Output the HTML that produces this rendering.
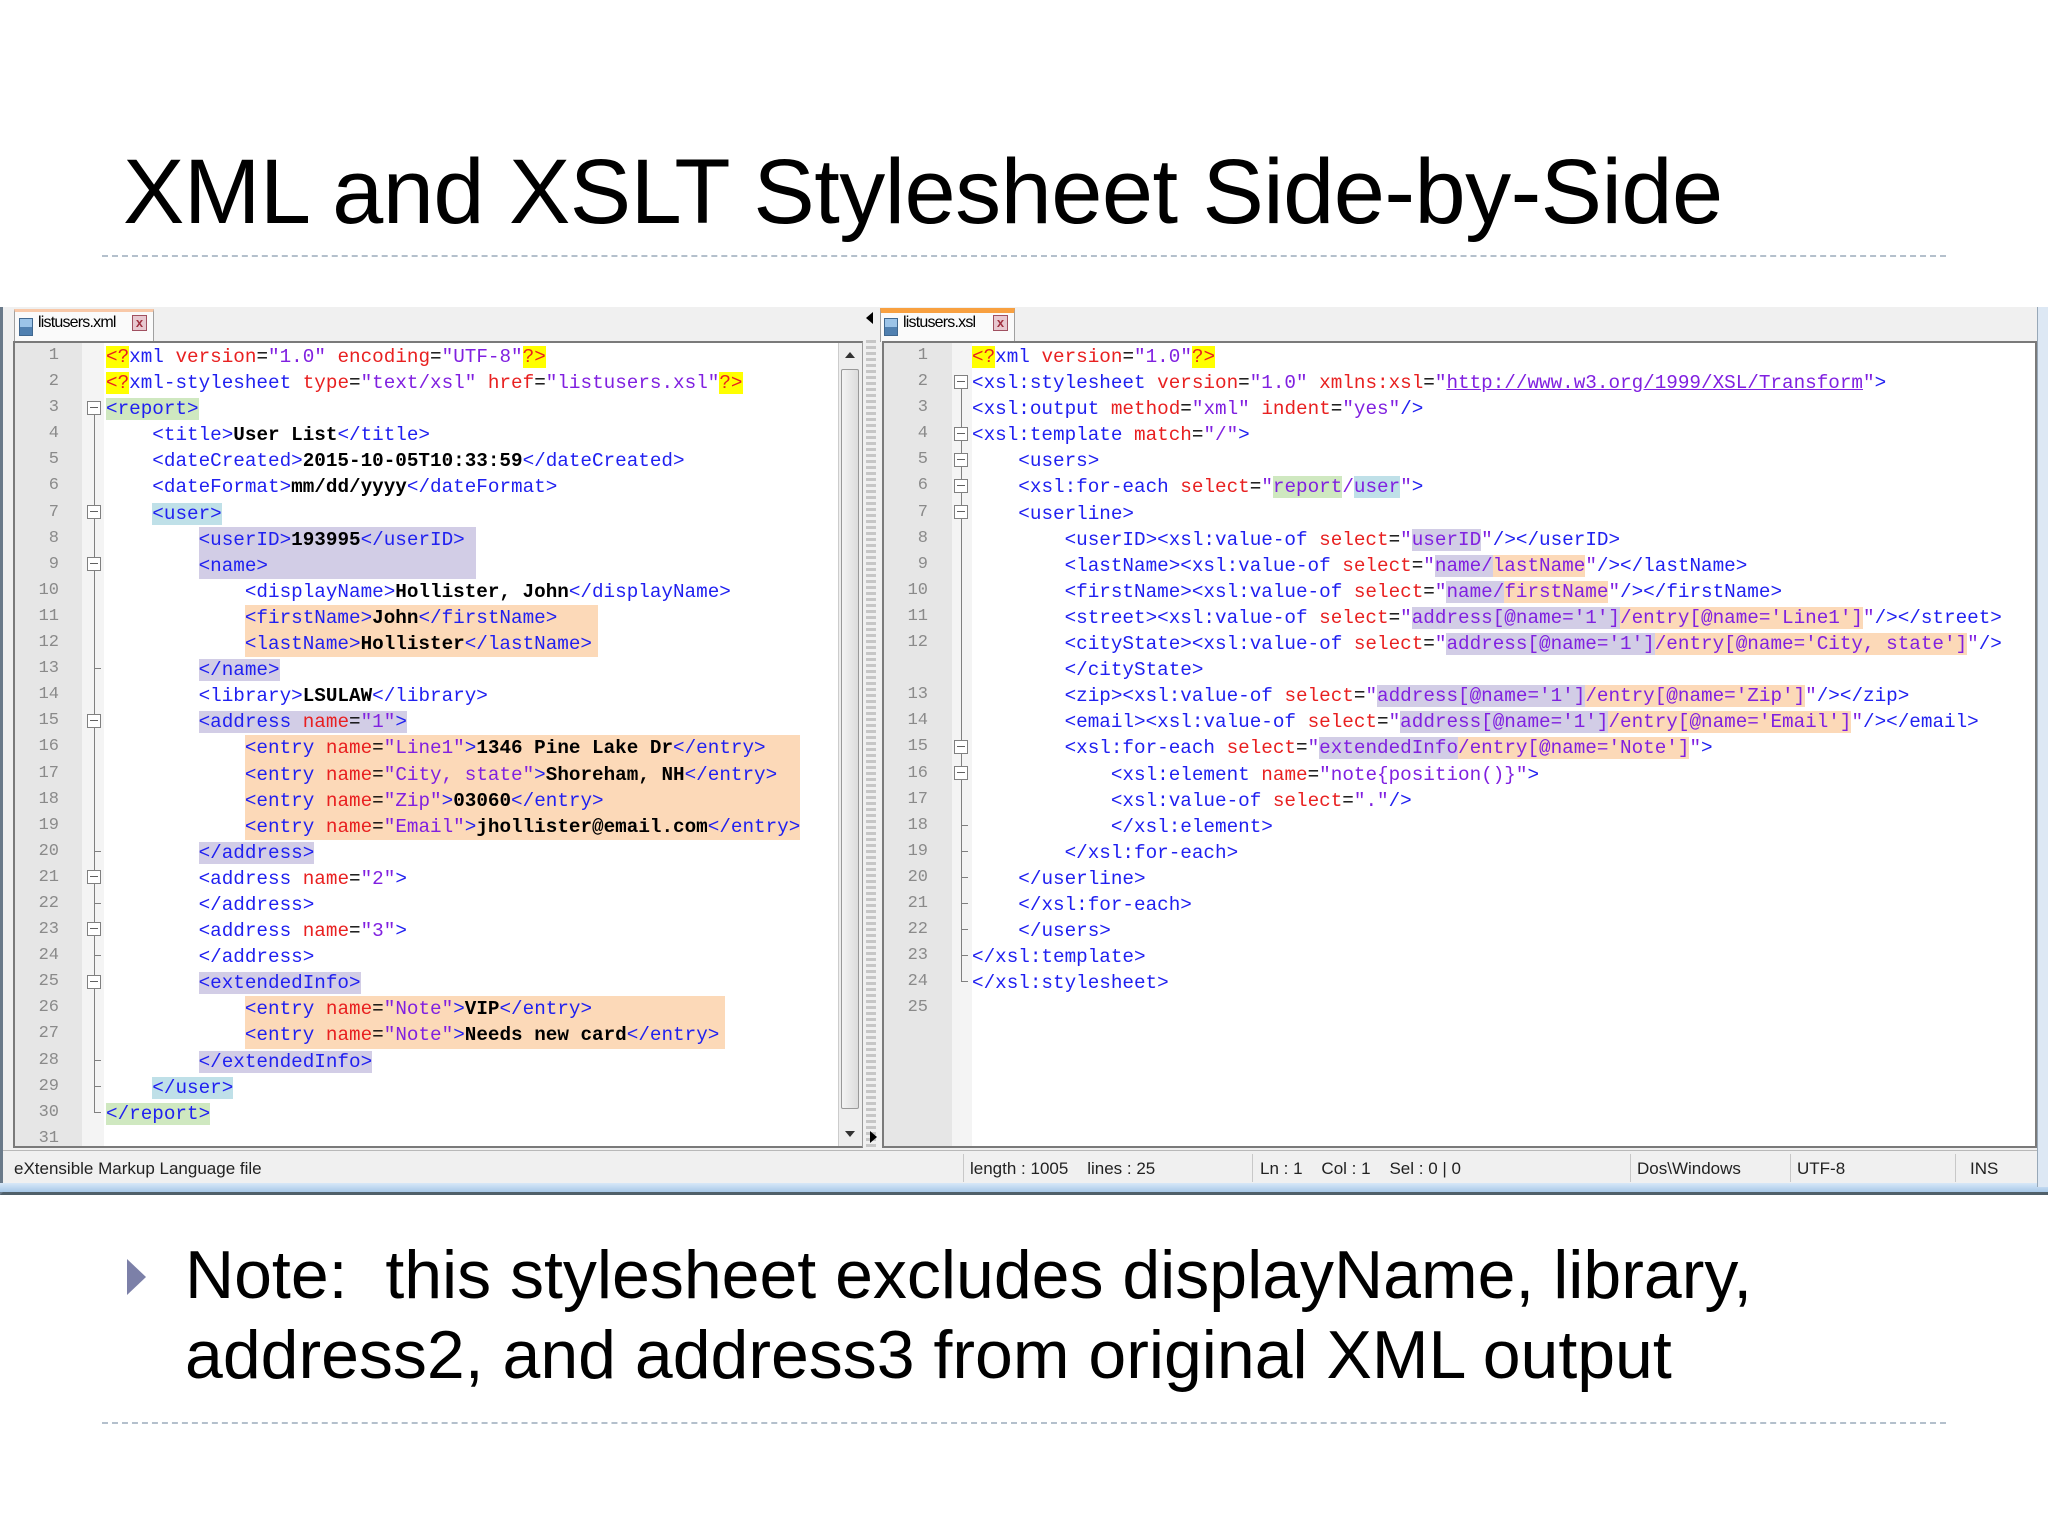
<!DOCTYPE html>
<html><head><meta charset="utf-8"><style>
*{margin:0;padding:0;box-sizing:border-box}
body{width:2048px;height:1536px;background:#fff;position:relative;overflow:hidden;font-family:"Liberation Sans",sans-serif}
.abs{position:absolute}
.title{left:123px;top:142px;font-size:92px;line-height:100px;letter-spacing:-0.55px;color:#000;white-space:nowrap}
.dash{height:0;border-top:2px dashed #b4c0cc}
.code{font-family:"Liberation Mono",monospace;font-size:19.3px;line-height:26.1px;white-space:normal;color:#000}
.code div{height:26.1px;white-space:pre}
.t{color:#2020f0}.a{color:#e82020}.v{color:#8020e0}.b{font-weight:bold;color:#000}
.y{background:#ffff00}.g{background:#cfe8c0}.u{background:#bfe0e8}.p{background:#d2cde6}.o{background:#fcd9b8}
.blk{display:inline-block}
.ln{font-family:"Liberation Mono",monospace;font-size:17px;line-height:26.1px;color:#8a8a8a;text-align:right}
.ln div{height:26.1px}
.fb{position:absolute;width:14px;height:14px;border:1px solid #808080;background:#fff}
.fb:after{content:"";position:absolute;left:2px;right:2px;top:5px;height:1px;background:#606060}
.fl{position:absolute;width:1px;background:#808080}
.tk{position:absolute;width:7px;height:1px;background:#808080}
.st{font-size:17px;color:#222;top:1159px;white-space:pre}
.sep{top:1154px;width:1px;height:28px;background:#c8c8c8}
.lnk{color:#8020e0;text-decoration:underline}
</style></head><body>

<div class="abs title">XML and XSLT Stylesheet Side-by-Side</div>
<div class="abs dash" style="left:102px;top:255px;width:1844px"></div>

<div class="abs" style="left:0;top:307px;width:2048px;height:888px;background:#f0f0f0;border-left:3px solid #6a7a8a;border-bottom:3px solid #50606a"></div>
<div class="abs" style="left:0;top:1183px;width:2048px;height:9px;background:linear-gradient(#d8e8f8,#a8c8e8)"></div>
<div class="abs" style="left:2037px;top:307px;width:11px;height:880px;background:#dde8f4;border-left:1px solid #98a8b8"></div>

<div class="abs" style="left:14px;top:309px;width:140px;height:33px;background:#fafafa;border:1px solid #a0a0a0;border-bottom:none;border-top:3px solid #f8c8a8"></div>
<div class="abs" style="left:19px;top:318px;width:14px;height:18px;background:linear-gradient(#9cc4e8 50%,#5080b0 50%);border:1px solid #406890"></div>
<div class="abs" style="left:38px;top:314px;font-size:16px;letter-spacing:-0.8px;color:#000">listusers.xml</div>
<div class="abs" style="left:132px;top:315px;width:15px;height:16px;background:#e8c8d0;border:1px solid #a05060;color:#a03040;font-size:13px;line-height:14px;text-align:center;font-weight:bold">x</div>

<div class="abs" style="left:880px;top:308px;width:135px;height:34px;background:#fafafa;border:1px solid #a0a0a0;border-bottom:none;border-top:5px solid #f8a040"></div>
<div class="abs" style="left:884px;top:318px;width:14px;height:18px;background:linear-gradient(#9cc4e8 50%,#5080b0 50%);border:1px solid #406890"></div>
<div class="abs" style="left:903px;top:314px;font-size:16px;letter-spacing:-0.8px;color:#000">listusers.xsl</div>
<div class="abs" style="left:993px;top:315px;width:15px;height:16px;background:#e8c8d0;border:1px solid #a05060;color:#a03040;font-size:13px;line-height:14px;text-align:center;font-weight:bold">x</div>

<div class="abs" style="left:866px;top:340px;width:10px;height:808px;background:repeating-linear-gradient(#bbb 0 3px,#f0f0f0 3px 6px);opacity:.8"></div>
<div class="abs" style="left:866px;top:312px;width:0;height:0;border-top:6px solid transparent;border-bottom:6px solid transparent;border-right:7px solid #000"></div>
<div class="abs" style="left:870px;top:1131px;width:0;height:0;border-top:6px solid transparent;border-bottom:6px solid transparent;border-left:7px solid #000"></div>

<div class="abs" style="left:13px;top:341px;width:850px;height:807px;background:#fff;border:2px solid #7a7a7a;border-right:1px solid #999;overflow:hidden">
  <div class="abs" style="left:0;top:0;width:67px;height:807px;background:#e6e6e6"></div>
  <div class="abs" style="left:67px;top:0;width:22px;height:807px;background:#f4f4f4"></div>
  <div class="abs" style="left:823px;top:0;width:24px;height:807px;background:#eee;border-left:1px solid #ccc"></div>
  <div class="abs" style="left:826px;top:26px;width:18px;height:740px;background:linear-gradient(90deg,#f4f4f4,#dcdcdc);border:1px solid #999;border-radius:2px"></div>
  <div class="abs" style="left:830px;top:9px;width:0;height:0;border-left:5px solid transparent;border-right:5px solid transparent;border-bottom:6px solid #333"></div>
  <div class="abs" style="left:830px;top:788px;width:0;height:0;border-left:5px solid transparent;border-right:5px solid transparent;border-top:6px solid #333"></div>
</div>
<div class="abs ln" style="left:13px;top:343px;width:46px"><div>1</div><div>2</div><div>3</div><div>4</div><div>5</div><div>6</div><div>7</div><div>8</div><div>9</div><div>10</div><div>11</div><div>12</div><div>13</div><div>14</div><div>15</div><div>16</div><div>17</div><div>18</div><div>19</div><div>20</div><div>21</div><div>22</div><div>23</div><div>24</div><div>25</div><div>26</div><div>27</div><div>28</div><div>29</div><div>30</div><div style="height:20px;overflow:hidden">31</div></div>
<div class="fl" style="left:94px;top:408px;height:704px"></div>
<div class="fb" style="left:87px;top:401px"></div>
<div class="fb" style="left:87px;top:505px"></div>
<div class="fb" style="left:87px;top:557px"></div>
<div class="fb" style="left:87px;top:714px"></div>
<div class="fb" style="left:87px;top:870px"></div>
<div class="fb" style="left:87px;top:922px"></div>
<div class="fb" style="left:87px;top:975px"></div>
<div class="tk" style="left:94px;top:668px"></div>
<div class="tk" style="left:94px;top:851px"></div>
<div class="tk" style="left:94px;top:903px"></div>
<div class="tk" style="left:94px;top:955px"></div>
<div class="tk" style="left:94px;top:1060px"></div>
<div class="tk" style="left:94px;top:1086px"></div>
<div class="tk" style="left:94px;top:1112px"></div>

<div class="abs code" style="left:106px;top:344px">
<div><span class="y a">&lt;?</span><span class="t">xml</span> <span class="a">version</span>=<span class="v">"1.0"</span> <span class="a">encoding</span>=<span class="v">"UTF-8"</span><span class="y a">?&gt;</span></div>
<div><span class="y a">&lt;?</span><span class="t">xml-stylesheet</span> <span class="a">type</span>=<span class="v">"text/xsl"</span> <span class="a">href</span>=<span class="v">"listusers.xsl"</span><span class="y a">?&gt;</span></div>
<div><span class="g t">&lt;report&gt;</span></div>
<div>    <span class="t">&lt;title&gt;</span><span class="b">User List</span><span class="t">&lt;/title&gt;</span></div>
<div>    <span class="t">&lt;dateCreated&gt;</span><span class="b">2015-10-05T10:33:59</span><span class="t">&lt;/dateCreated&gt;</span></div>
<div>    <span class="t">&lt;dateFormat&gt;</span><span class="b">mm/dd/yyyy</span><span class="t">&lt;/dateFormat&gt;</span></div>
<div>    <span class="u t">&lt;user&gt;</span></div>
<div>        <span class="p blk" style="width:24ch"><span class="t">&lt;userID&gt;</span><span class="b">193995</span><span class="t">&lt;/userID&gt;</span></span></div>
<div>        <span class="p blk" style="width:24ch"><span class="t">&lt;name&gt;</span></span></div>
<div>            <span class="t">&lt;displayName&gt;</span><span class="b">Hollister, John</span><span class="t">&lt;/displayName&gt;</span></div>
<div>            <span class="o blk" style="width:30.5ch"><span class="t">&lt;firstName&gt;</span><span class="b">John</span><span class="t">&lt;/firstName&gt;</span></span></div>
<div>            <span class="o blk" style="width:30.5ch"><span class="t">&lt;lastName&gt;</span><span class="b">Hollister</span><span class="t">&lt;/lastName&gt;</span></span></div>
<div>        <span class="p t">&lt;/name&gt;</span></div>
<div>        <span class="t">&lt;library&gt;</span><span class="b">LSULAW</span><span class="t">&lt;/library&gt;</span></div>
<div>        <span class="p"><span class="t">&lt;address</span> <span class="a">name</span>=<span class="v">"1"</span><span class="t">&gt;</span></span></div>
<div>            <span class="o blk" style="width:48ch"><span class="t">&lt;entry</span> <span class="a">name</span>=<span class="v">"Line1"</span><span class="t">&gt;</span><span class="b">1346 Pine Lake Dr</span><span class="t">&lt;/entry&gt;</span></span></div>
<div>            <span class="o blk" style="width:48ch"><span class="t">&lt;entry</span> <span class="a">name</span>=<span class="v">"City, state"</span><span class="t">&gt;</span><span class="b">Shoreham, NH</span><span class="t">&lt;/entry&gt;</span></span></div>
<div>            <span class="o blk" style="width:48ch"><span class="t">&lt;entry</span> <span class="a">name</span>=<span class="v">"Zip"</span><span class="t">&gt;</span><span class="b">03060</span><span class="t">&lt;/entry&gt;</span></span></div>
<div>            <span class="o blk" style="width:48ch"><span class="t">&lt;entry</span> <span class="a">name</span>=<span class="v">"Email"</span><span class="t">&gt;</span><span class="b">jhollister@email.com</span><span class="t">&lt;/entry&gt;</span></span></div>
<div>        <span class="p t">&lt;/address&gt;</span></div>
<div>        <span class="t">&lt;address</span> <span class="a">name</span>=<span class="v">"2"</span><span class="t">&gt;</span></div>
<div>        <span class="t">&lt;/address&gt;</span></div>
<div>        <span class="t">&lt;address</span> <span class="a">name</span>=<span class="v">"3"</span><span class="t">&gt;</span></div>
<div>        <span class="t">&lt;/address&gt;</span></div>
<div>        <span class="p t">&lt;extendedInfo&gt;</span></div>
<div>            <span class="o blk" style="width:41.5ch"><span class="t">&lt;entry</span> <span class="a">name</span>=<span class="v">"Note"</span><span class="t">&gt;</span><span class="b">VIP</span><span class="t">&lt;/entry&gt;</span></span></div>
<div>            <span class="o blk" style="width:41.5ch"><span class="t">&lt;entry</span> <span class="a">name</span>=<span class="v">"Note"</span><span class="t">&gt;</span><span class="b">Needs new card</span><span class="t">&lt;/entry&gt;</span></span></div>
<div>        <span class="p t">&lt;/extendedInfo&gt;</span></div>
<div>    <span class="u t">&lt;/user&gt;</span></div>
<div><span class="g t">&lt;/report&gt;</span></div>
</div>

<div class="abs" style="left:882px;top:341px;width:1155px;height:807px;background:#fff;border:2px solid #7a7a7a;overflow:hidden">
  <div class="abs" style="left:0;top:0;width:68px;height:807px;background:#e6e6e6"></div>
  <div class="abs" style="left:68px;top:0;width:20px;height:807px;background:#f4f4f4"></div>
</div>
<div class="abs ln" style="left:882px;top:343px;width:46px"><div>1</div><div>2</div><div>3</div><div>4</div><div>5</div><div>6</div><div>7</div><div>8</div><div>9</div><div>10</div><div>11</div><div>12</div><div></div><div>13</div><div>14</div><div>15</div><div>16</div><div>17</div><div>18</div><div>19</div><div>20</div><div>21</div><div>22</div><div>23</div><div>24</div><div>25</div></div>
<div class="fl" style="left:961px;top:382px;height:600px"></div>
<div class="fb" style="left:954px;top:375px"></div>
<div class="fb" style="left:954px;top:427px"></div>
<div class="fb" style="left:954px;top:453px"></div>
<div class="fb" style="left:954px;top:479px"></div>
<div class="fb" style="left:954px;top:505px"></div>
<div class="fb" style="left:954px;top:740px"></div>
<div class="fb" style="left:954px;top:766px"></div>
<div class="tk" style="left:961px;top:825px"></div>
<div class="tk" style="left:961px;top:851px"></div>
<div class="tk" style="left:961px;top:877px"></div>
<div class="tk" style="left:961px;top:903px"></div>
<div class="tk" style="left:961px;top:929px"></div>
<div class="tk" style="left:961px;top:955px"></div>
<div class="tk" style="left:961px;top:981px"></div>

<div class="abs code" style="left:972px;top:344px">
<div><span class="y a">&lt;?</span><span class="t">xml</span> <span class="a">version</span>=<span class="v">"1.0"</span><span class="y a">?&gt;</span></div>
<div><span class="t">&lt;xsl:stylesheet</span> <span class="a">version</span>=<span class="v">"1.0"</span> <span class="a">xmlns:xsl</span>=<span class="v">"</span><span class="lnk">http://www.w3.org/1999/XSL/Transform</span><span class="v">"</span><span class="t">&gt;</span></div>
<div><span class="t">&lt;xsl:output</span> <span class="a">method</span>=<span class="v">"xml"</span> <span class="a">indent</span>=<span class="v">"yes"</span><span class="t">/&gt;</span></div>
<div><span class="t">&lt;xsl:template</span> <span class="a">match</span>=<span class="v">"/"</span><span class="t">&gt;</span></div>
<div>    <span class="t">&lt;users&gt;</span></div>
<div>    <span class="t">&lt;xsl:for-each</span> <span class="a">select</span>=<span class="v">"<span class="g">report</span>/<span class="u">user</span>"</span><span class="t">&gt;</span></div>
<div>    <span class="t">&lt;userline&gt;</span></div>
<div>        <span class="t">&lt;userID&gt;&lt;xsl:value-of</span> <span class="a">select</span>=<span class="v">"<span class="p">userID</span>"</span><span class="t">/&gt;&lt;/userID&gt;</span></div>
<div>        <span class="t">&lt;lastName&gt;&lt;xsl:value-of</span> <span class="a">select</span>=<span class="v">"<span class="p">name/</span><span class="o">lastName</span>"</span><span class="t">/&gt;&lt;/lastName&gt;</span></div>
<div>        <span class="t">&lt;firstName&gt;&lt;xsl:value-of</span> <span class="a">select</span>=<span class="v">"<span class="p">name/</span><span class="o">firstName</span>"</span><span class="t">/&gt;&lt;/firstName&gt;</span></div>
<div>        <span class="t">&lt;street&gt;&lt;xsl:value-of</span> <span class="a">select</span>=<span class="v">"<span class="p">address[@name='1']</span><span class="o">/entry[@name='Line1']</span>"</span><span class="t">/&gt;&lt;/street&gt;</span></div>
<div>        <span class="t">&lt;cityState&gt;&lt;xsl:value-of</span> <span class="a">select</span>=<span class="v">"<span class="p">address[@name='1']</span><span class="o">/entry[@name='City, state']</span>"</span><span class="t">/&gt;</span></div>
<div>        <span class="t">&lt;/cityState&gt;</span></div>
<div>        <span class="t">&lt;zip&gt;&lt;xsl:value-of</span> <span class="a">select</span>=<span class="v">"<span class="p">address[@name='1']</span><span class="o">/entry[@name='Zip']</span>"</span><span class="t">/&gt;&lt;/zip&gt;</span></div>
<div>        <span class="t">&lt;email&gt;&lt;xsl:value-of</span> <span class="a">select</span>=<span class="v">"<span class="p">address[@name='1']</span><span class="o">/entry[@name='Email']</span>"</span><span class="t">/&gt;&lt;/email&gt;</span></div>
<div>        <span class="t">&lt;xsl:for-each</span> <span class="a">select</span>=<span class="v">"<span class="p">extendedInfo</span><span class="o">/entry[@name='Note']</span>"</span><span class="t">&gt;</span></div>
<div>            <span class="t">&lt;xsl:element</span> <span class="a">name</span>=<span class="v">"note{position()}"</span><span class="t">&gt;</span></div>
<div>            <span class="t">&lt;xsl:value-of</span> <span class="a">select</span>=<span class="v">"."</span><span class="t">/&gt;</span></div>
<div>            <span class="t">&lt;/xsl:element&gt;</span></div>
<div>        <span class="t">&lt;/xsl:for-each&gt;</span></div>
<div>    <span class="t">&lt;/userline&gt;</span></div>
<div>    <span class="t">&lt;/xsl:for-each&gt;</span></div>
<div>    <span class="t">&lt;/users&gt;</span></div>
<div><span class="t">&lt;/xsl:template&gt;</span></div>
<div><span class="t">&lt;/xsl:stylesheet&gt;</span></div>
</div>

<div class="abs" style="left:3px;top:1150px;width:2034px;height:33px;background:#f0f0f0;border-top:1px solid #b8b8b8"></div>
<div class="abs st" style="left:14px">eXtensible Markup Language file</div>
<div class="abs sep" style="left:963px"></div>
<div class="abs st" style="left:970px">length : 1005    lines : 25</div>
<div class="abs sep" style="left:1252px"></div>
<div class="abs st" style="left:1260px">Ln : 1    Col : 1    Sel : 0 | 0</div>
<div class="abs sep" style="left:1630px"></div>
<div class="abs st" style="left:1637px">Dos\Windows</div>
<div class="abs sep" style="left:1790px"></div>
<div class="abs st" style="left:1797px">UTF-8</div>
<div class="abs sep" style="left:1955px"></div>
<div class="abs st" style="left:1970px">INS</div>

<div class="abs" style="left:127px;top:1259px;width:0;height:0;border-top:18px solid transparent;border-bottom:18px solid transparent;border-left:19px solid #7c80a8"></div>
<div class="abs" style="left:185px;top:1235px;font-size:68px;line-height:80px;color:#000;white-space:pre">Note:  this stylesheet excludes displayName, library,<br>address2, and address3 from original XML output</div>
<div class="abs dash" style="left:102px;top:1422px;width:1844px"></div>
</body></html>
